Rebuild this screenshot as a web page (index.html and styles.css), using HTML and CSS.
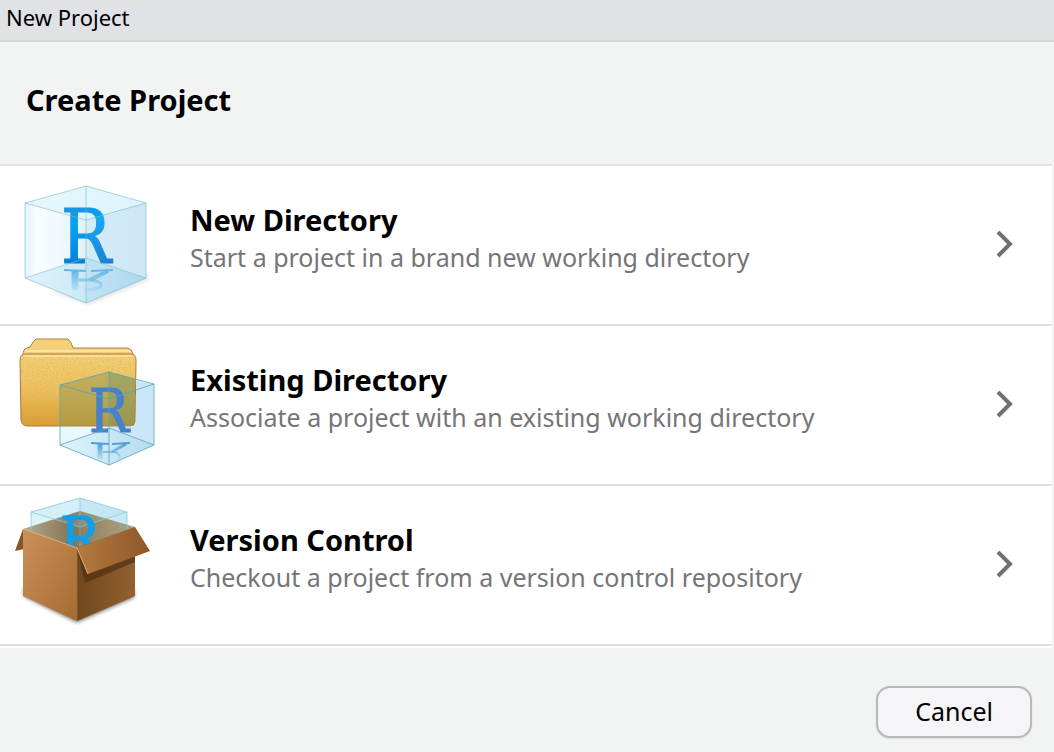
FILE: index.html
```html
<!DOCTYPE html>
<html lang="en">
<head>
    <meta charset="UTF-8">
    <meta name="viewport" content="width=device-width, initial-scale=1.0">
    <title>New Project</title>
    <link rel="stylesheet" href="styles.css">
</head>
<body>
    <div class="dialog" role="dialog" aria-labelledby="dialog-title">
        <header class="title-bar" id="dialog-title">New Project</header>
        <h1 class="page-title">Create Project</h1>

        <main class="options">
            <button type="button" class="option">
                <svg class="option-icon" viewBox="0 0 160 158" aria-hidden="true">
                    <defs>
                        <linearGradient id="left-face"><stop offset="0" stop-color="#e2f2fb"/><stop offset=".2" stop-color="#fafdff"/><stop offset="1" stop-color="#e2f3fa"/></linearGradient>
                        <linearGradient id="right-face"><stop offset="0" stop-color="#e2f3fa"/><stop offset="1" stop-color="#d8ecfb"/></linearGradient>
                        <linearGradient id="floor" x2="1"><stop offset="0" stop-color="#dff5fd"/><stop offset="1" stop-color="#b4dbef"/></linearGradient>
                        <linearGradient id="letter" x1="0" y1="0" x2=".2" y2="1"><stop offset="0" stop-color="#2887dc"/><stop offset=".4" stop-color="#06a2f2"/><stop offset="1" stop-color="#0870ce"/></linearGradient>
                        <linearGradient id="mirror" gradientUnits="userSpaceOnUse" x1="0" y1="103" x2="0" y2="125"><stop offset="0" stop-color="#5fb3e3"/><stop offset="1" stop-color="#5fb3e3" stop-opacity=".15"/></linearGradient>
                        <filter id="soft" x="-20%" y="-20%" width="140%" height="140%"><feGaussianBlur stdDeviation="2"/></filter>
                    </defs>
                    <path d="M50 125L88 138L147 114V106L88 130Z" fill="#7c8d98" opacity=".3" filter="url(#soft)"/>
                    <path d="M25 37L86 20V92L25 112Z" fill="url(#left-face)"/>
                    <path d="M86 20L146 37V112L86 92Z" fill="url(#right-face)"/>
                    <path d="M25 37L86 20L146 37L86 54Z" fill="#e1f5fb" opacity=".8"/>
                    <path d="M25 112L86 92L146 112L86 137Z" fill="url(#floor)"/>
                    <g fill="none" stroke="url(#mirror)">
                        <path d="M64 104L86 105M91 105L113 104" stroke-width="2"/>
                        <path d="M75 105V124" stroke-width="7"/>
                        <path d="M108 105L90 114" stroke-width="4"/>
                        <path d="M79 114H92Q102 116 101 120Q98 124 84 124" stroke-width="3"/>
                    </g>
                    <text x="61" y="97" font-size="74" class="logo-letter" fill="url(#letter)" stroke="url(#letter)">R</text>
                    <path d="M86 54L146 37V112L86 137Z" fill="#8fc8e8" opacity=".15"/>
                    <path d="M25 37L86 20L146 37L86 54ZM25 37V112L86 137L146 112V37M86 20V137M25 112L86 92L146 112" fill="none" stroke="#79bcc5" stroke-opacity=".6"/>
                </svg>
                <span class="option-text">
                    <strong>New Directory</strong>
                    <span>Start a project in a brand new working directory</span>
                </span>
                <svg class="chevron" viewBox="0 0 18 28" aria-hidden="true"><path d="M2 1L14 13L2 25"/></svg>
            </button>

            <button type="button" class="option">
                <svg class="option-icon" viewBox="0 0 160 158" aria-hidden="true">
                    <defs>
                        <linearGradient id="folder" x1="0" y1="0" x2="0" y2="1"><stop offset="0" stop-color="#f5d37c"/><stop offset=".5" stop-color="#edc162"/><stop offset="1" stop-color="#d99a33"/></linearGradient>
                        <linearGradient id="mirror-small" gradientUnits="userSpaceOnUse" x1="0" y1="116" x2="0" y2="134"><stop offset="0" stop-color="#469bd8"/><stop offset="1" stop-color="#469bd8" stop-opacity=".1"/></linearGradient>
                        <clipPath id="folder-area"><path d="M20 34Q20 28 26 28H130Q136 28 136 34V95Q136 100 131 100H26Q21 100 21 94Z"/></clipPath>
                        <filter id="grain" x="0" y="0" width="100%" height="100%">
                            <feTurbulence type="fractalNoise" baseFrequency=".6" numOctaves="2" seed="3"/>
                            <feColorMatrix values="0 0 0 0 .7  0 0 0 0 .42  0 0 0 0 .05  1.500 0 0 0 -.55"/>
                        </filter>
                    </defs>
                    <path d="M23 29Q23 23 27 22L30 21Q34 14 36 13H68Q71 15 73 22H128Q132 23 133 28L135 35H22Z" fill="#f4cf79" stroke="#ae8145"/>
                    <path d="M25 25H131" stroke="#fae3a3" stroke-width="2"/>
                    <path d="M20 34Q20 28 26 28H130Q136 28 136 34L135 95Q135 100 130 100H27Q22 100 21 94Z" fill="url(#folder)" stroke="#a5783b"/>
                    <rect x="20" y="28" width="116" height="72" filter="url(#grain)" clip-path="url(#folder-area)" opacity=".7"/>
                    <path d="M24 30H132" stroke="#fff1b8"/>
                    <path d="M60 59L109 46L135 53V97Q135 100 130 100H60Z" fill="#8a9452" opacity=".45"/>
                    <path d="M109 46L135 53V97Q135 100 130 100H109Z" fill="#65916d" opacity=".3"/>
                    <path d="M60 101H109V102L154 119L109 139L60 119Z" fill="#e9f7ff"/>
                    <path d="M136 54L154 58V119L109 102V101H132L136 98Z" fill="#cbe6fa"/>
                    <path d="M60 119L109 102L154 119L109 139Z" fill="url(#floor)"/>
                    <g fill="none" stroke="url(#mirror-small)">
                        <path d="M91 117L109 118M112 118L130 117" stroke-width="2"/>
                        <path d="M100 118V134" stroke-width="5"/>
                        <path d="M126 118L112 126" stroke-width="3"/>
                        <path d="M103 126H115Q122 129 119 133" stroke-width="2"/>
                    </g>
                    <text x="89" y="106" font-size="59" class="logo-letter" fill="#4780cb" stroke="#4780cb">R</text>
                    <path d="M60 59L109 46L154 58L109 73ZM60 59V119L109 139L154 119V58M109 46V139M60 119L109 102L154 119" fill="none" stroke="#55a8b3" stroke-opacity=".8"/>
                </svg>
                <span class="option-text">
                    <strong>Existing Directory</strong>
                    <span>Associate a project with an existing working directory</span>
                </span>
                <svg class="chevron" viewBox="0 0 18 28" aria-hidden="true"><path d="M2 1L14 13L2 25"/></svg>
            </button>

            <button type="button" class="option">
                <svg class="option-icon" viewBox="0 0 160 158" aria-hidden="true">
                    <defs>
                        <linearGradient id="box-left" x1="0" y1="0" x2="1" y2="1"><stop offset="0" stop-color="#cb915b"/><stop offset="1" stop-color="#a56b30"/></linearGradient>
                        <linearGradient id="box-right"><stop offset="0" stop-color="#70471f"/><stop offset="1" stop-color="#94602f"/></linearGradient>
                        <linearGradient id="box-inside"><stop offset="0" stop-color="#b5aa92"/><stop offset=".45" stop-color="#857252"/><stop offset=".55" stop-color="#97825f"/><stop offset="1" stop-color="#aaa488"/></linearGradient>
                        <linearGradient id="flap"><stop offset="0" stop-color="#b57a3f"/><stop offset="1" stop-color="#8d582a"/></linearGradient>
                    </defs>
                    <path d="M24 110L77 136L134 111V104L77 127L24 102Z" fill="#333" opacity=".8" filter="url(#soft)"/>
                    <path d="M31 26L80 12L127 26V46H31Z" fill="#dcf2f9"/>
                    <path d="M80 12L127 26V46H80Z" fill="#cbe8f5"/>
                    <path d="M23 43L80 25L135 41L77 63Z" fill="url(#box-inside)"/>
                    <path d="M31 26L80 12L127 26L80 41ZM31 26V45M127 26V44M80 12V60" fill="#a7dce9" fill-opacity=".15" stroke="#81cbd5" stroke-opacity=".75"/>
                    <text x="60" y="74" font-size="59" class="logo-letter" fill="#109fea" stroke="#109fea">R</text>
                    <path d="M80 31V58" stroke="#267fa5" stroke-opacity=".4"/>
                    <path d="M23 43L15 65L24 63Z" fill="#885329"/>
                    <path d="M23 43L77 62V135L23 110Z" fill="url(#box-left)"/>
                    <path d="M77 62L135 41V110L77 135Z" fill="url(#box-right)"/>
                    <path d="M77 62L85 97L135 76V62Z" fill="#4b2d11" opacity=".65"/>
                    <path d="M77 62L135 41L150 65L88 88Z" fill="url(#flap)"/>
                    <path d="M24 43L77 62L88 88" fill="none" stroke="#dfb07e"/>
                    <path d="M77 63V134" stroke="#a97947" stroke-opacity=".5"/>
                </svg>
                <span class="option-text">
                    <strong>Version Control</strong>
                    <span>Checkout a project from a version control repository</span>
                </span>
                <svg class="chevron" viewBox="0 0 18 28" aria-hidden="true"><path d="M2 1L14 13L2 25"/></svg>
            </button>
        </main>

        <footer class="actions">
            <button type="button" class="cancel">Cancel</button>
        </footer>
    </div>
</body>
</html>
```

FILE: styles.css
```css
* {
    box-sizing: border-box;
}
body {
    margin: 0;
    background-color: #f2f4f4;
    color: #000;
    font-family: "Lucida Grande", "Noto Sans", sans-serif;
}
button {
    font-family: inherit;
    color: inherit;
    cursor: pointer;
}
.title-bar {
    padding: 2px 6px 8px;
    background-color: #e1e2e6;
    border-bottom: 2px solid #d6d8dc;
    font-size: 22px;
    line-height: 30px;
}
.page-title {
    margin: 0;
    padding: 38px 26px 44px;
    font-size: 29px;
    line-height: 40px;
}
.options {
    margin-right: 2px;
    border-top: 2px solid #e3e5e5;
    border-bottom: 2px solid #fff;
}
.option {
    display: flex;
    align-items: center;
    width: 100%;
    padding: 0 38px 0 0;
    background-color: #fff;
    border: none;
    border-bottom: 2px solid #dfdfdf;
    text-align: left;
}
.option:hover {
    background-color: #fafcfe;
}
.option-icon {
    flex: none;
    width: 160px;
    height: 158px;
}
.logo-letter {
    font-family: "DejaVu Serif Condensed", "DejaVu Serif", serif;
}
.option-text {
    flex: 1;
    padding: 0 20px 16px 30px;
    color: #757575;
    font-size: 25px;
    line-height: 34px;
}
.option-text strong {
    display: block;
    color: #000;
    font-size: 29px;
    line-height: 40px;
}
.chevron {
    flex: none;
    width: 18px;
    height: 28px;
    fill: none;
    stroke: #6d7175;
    stroke-width: 4;
}
.actions {
    display: flex;
    justify-content: flex-end;
    padding: 38px 22px 14px;
}
.cancel {
    padding: 5px 37px 7px;
    background-color: #f5f5f8;
    border: 2px solid #b9b9b9;
    border-radius: 14px;
    box-shadow: 0 1px 2px #ddd;
    font-size: 25px;
    line-height: 36px;
}
```
